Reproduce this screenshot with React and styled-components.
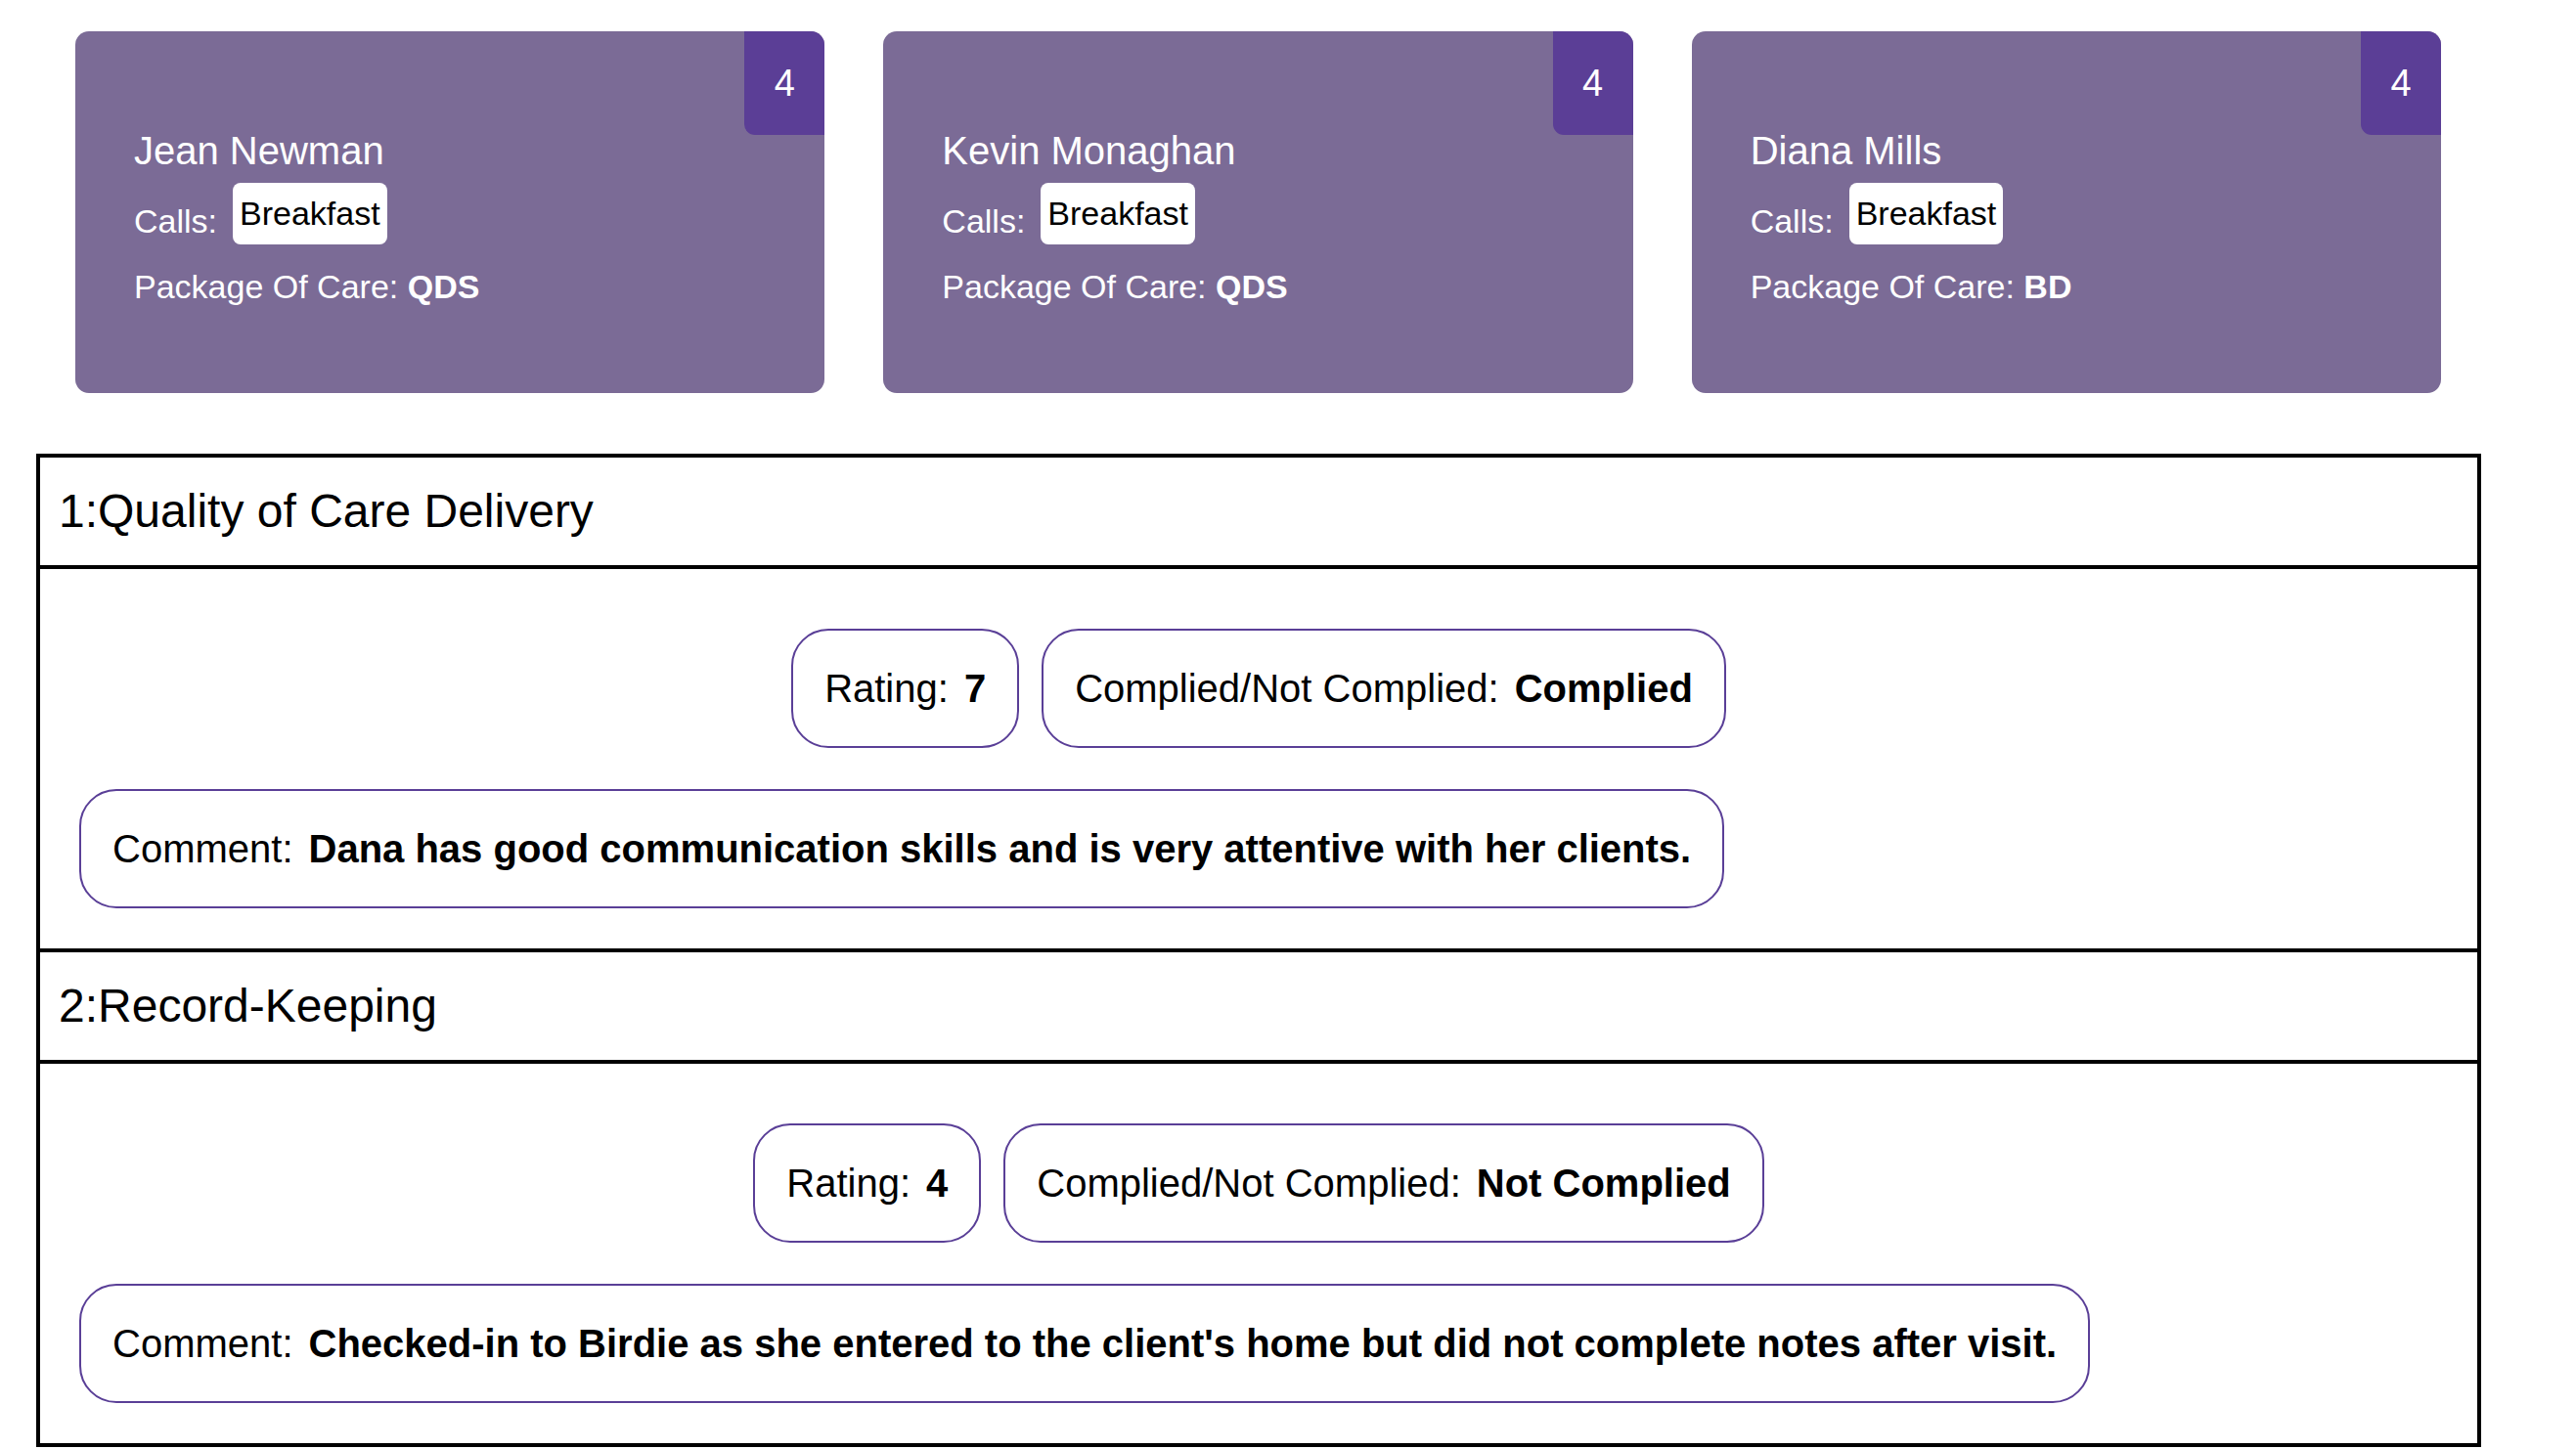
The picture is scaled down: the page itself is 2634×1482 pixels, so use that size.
import React from "react";
import styled, { createGlobalStyle } from "styled-components";

const GlobalStyle = createGlobalStyle`
  html, body {
    margin: 0;
    padding: 0;
    background: #ffffff;
    font-family: "Liberation Sans", Arial, Helvetica, sans-serif;
    color: #000;
  }
  * { box-sizing: border-box; }
`;

const Page = styled.div`
  width: 2500px;
  margin-left: 37px;
  padding-top: 32px;
  display: flex;
  flex-direction: column;
  gap: 62px;
`;

const CardRow = styled.div`
  display: grid;
  grid-template-columns: repeat(3, 1fr);
  column-gap: 60px;
  padding: 0 41px 0 40px;
`;

const Card = styled.div`
  position: relative;
  height: 370px;
  background: #7b6b96;
  border-radius: 14px;
  overflow: hidden;
  padding: 100px 60px 0;
  color: #ffffff;
  display: flex;
  flex-direction: column;
`;

const Badge = styled.div`
  position: absolute;
  top: 0;
  right: 0;
  width: 82px;
  height: 106px;
  background: #5b3e96;
  border-bottom-left-radius: 11px;
  display: flex;
  align-items: center;
  justify-content: center;
  font-size: 38px;
  color: #fff;
`;

const Name = styled.div`
  font-size: 40px;
  line-height: normal;
  margin-bottom: 10px;
`;

const CallsRow = styled.div`
  display: flex;
  align-items: flex-end;
  gap: 16px;
  font-size: 34px;
  margin-bottom: 24px;
`;

const CallsLabel = styled.span`
  margin-bottom: 4px;
`;

const Tag = styled.span`
  background: #ffffff;
  color: #000;
  border-radius: 8px;
  padding: 12px 7px;
  line-height: normal;
`;

const Detail = styled.div`
  font-size: 34px;
  line-height: normal;
`;

const Strong = styled.span`
  font-weight: bold;
`;

const Table = styled.div`
  border: 4px solid #000;
  display: flex;
  flex-direction: column;
`;

const Criterion = styled.div`
  display: flex;
  flex-direction: column;
  &:not(:last-child) {
    border-bottom: 4px solid #000;
  }
`;

const Header = styled.div`
  font-size: 48px;
  line-height: normal;
  padding: 27px 19px 28px;
  border-bottom: 4px solid #000;
`;

const Body = styled.div`
  padding: 61px 40px 41px;
  display: flex;
  flex-direction: column;
  gap: 42px;
`;

const PillRow = styled.div`
  display: flex;
  justify-content: center;
  gap: 23px;
`;

const Pill = styled.div`
  display: flex;
  align-items: baseline;
  border: 2px solid #5a3f97;
  border-radius: 38px;
  padding: 36px 32px;
  font-size: 40px;
  line-height: 46px;
  white-space: nowrap;
  align-self: ${(p) => (p.$start ? "flex-start" : "auto")};
`;

const Value = styled.span`
  font-weight: bold;
  margin-left: 16px;
`;

const carers = [
  { name: "Jean Newman", calls: "Breakfast", poc: "QDS", count: 4 },
  { name: "Kevin Monaghan", calls: "Breakfast", poc: "QDS", count: 4 },
  { name: "Diana Mills", calls: "Breakfast", poc: "BD", count: 4 },
];

const criteria = [
  {
    title: "1:Quality of Care Delivery",
    rating: 7,
    complied: "Complied",
    comment: "Dana has good communication skills and is very attentive with her clients.",
  },
  {
    title: "2:Record-Keeping",
    rating: 4,
    complied: "Not Complied",
    comment:
      "Checked-in to Birdie as she entered to the client's home but did not complete notes after visit.",
  },
];

export default function App() {
  return (
    <>
      <GlobalStyle />
      <Page>
        <CardRow>
          {carers.map((c) => (
            <Card key={c.name}>
              <Badge>{c.count}</Badge>
              <Name>{c.name}</Name>
              <CallsRow>
                <CallsLabel>Calls:</CallsLabel>
                <Tag>{c.calls}</Tag>
              </CallsRow>
              <Detail>
                Package Of Care: <Strong>{c.poc}</Strong>
              </Detail>
            </Card>
          ))}
        </CardRow>
        <Table>
          {criteria.map((c) => (
            <Criterion key={c.title}>
              <Header>{c.title}</Header>
              <Body>
                <PillRow>
                  <Pill>
                    Rating:<Value>{c.rating}</Value>
                  </Pill>
                  <Pill>
                    Complied/Not Complied:<Value>{c.complied}</Value>
                  </Pill>
                </PillRow>
                <Pill $start>
                  Comment:<Value>{c.comment}</Value>
                </Pill>
              </Body>
            </Criterion>
          ))}
        </Table>
      </Page>
    </>
  );
}
